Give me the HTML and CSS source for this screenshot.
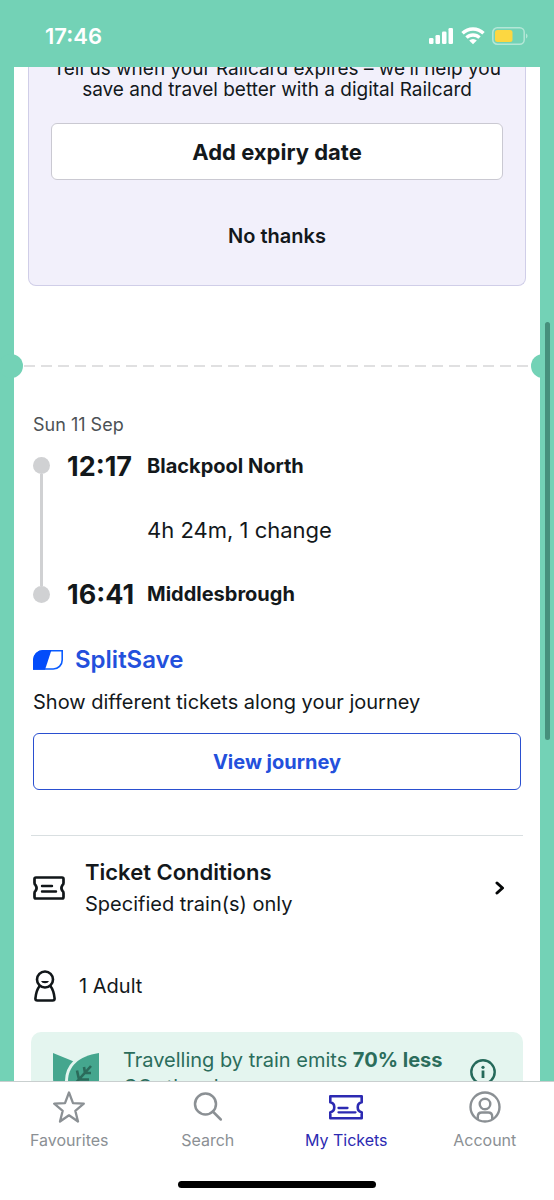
FILE: index.html
```html
<!DOCTYPE html>
<html lang="en">
<head>
<meta charset="utf-8">
<meta name="viewport" content="width=device-width, initial-scale=1">
<title>My Tickets</title>
<link rel="stylesheet" href="styles.css">
</head>
<body>
<div class="app">
  <header class="status">
    <time class="clock">17:46</time>
    <div class="status-icons">
      <svg width="26" height="18" viewBox="0 0 26 18" fill="#fff"><rect x="1" y="11" width="4.500" height="6" rx="1.300"/><rect x="7.500" y="8" width="4.500" height="9" rx="1.300"/><rect x="14" y="4.500" width="4.500" height="12.500" rx="1.300"/><rect x="20.500" y="1" width="4.500" height="16" rx="1.300"/></svg>
      <svg width="24" height="18" viewBox="0 0 24 18"><g fill="none" stroke="#fff" stroke-width="3.400"><path d="M1.500 6.300a15 15 0 0 1 21 0"/><path d="M5.500 10.600a9.300 9.300 0 0 1 13 0"/></g><path d="M8.200 13.500a5.400 5.400 0 0 1 7.600 0L12 17.300z" fill="#fff"/></svg>
      <svg width="36" height="18" viewBox="0 0 36 18"><rect x=".8" y=".8" width="31.400" height="16.400" rx="4.500" fill="none" stroke="#b4e7d7" stroke-width="1.500"/><path d="M34 6.500v5c2-.8 2-4.200 0-5z" fill="#b4e7d7"/><rect x="3" y="3" width="17.500" height="12" rx="2.500" fill="#fcd741"/></svg>
    </div>
  </header>

  <main class="view">
    <article class="ticket">
      <section class="promo">
        <p class="promo-text">Tell us when your Railcard expires – we’ll help you save and travel better with a digital Railcard</p>
        <button class="promo-button" type="button">Add expiry date</button>
        <button class="promo-dismiss" type="button">No thanks</button>
      </section>

      <div class="perforation"></div>

      <section class="journey">
        <p class="date">Sun 11 Sep</p>
        <div class="legs">
          <div class="track"><i class="dot"></i><i class="line"></i><i class="dot"></i></div>
          <time class="time">12:17</time><strong class="station">Blackpool North</strong>
          <span class="duration">4h 24m, 1 change</span>
          <time class="time">16:41</time><strong class="station">Middlesbrough</strong>
        </div>
        <h2 class="split">
          <svg width="30" height="20" viewBox="0 0 30 20"><path d="M10 .8h19.200V10a9 9 0 0 1-9 9H.8V10A9.200 9.200 0 0 1 10 .8z" fill="#fff" stroke="#0a5cff" stroke-width="1.600"/><path d="M10 0h8.500L12 19.800H0V10A10 10 0 0 1 10 0z" fill="#034cfa"/></svg>
          SplitSave
        </h2>
        <p class="split-text">Show different tickets along your journey</p>
        <button class="view-button" type="button">View journey</button>
      </section>

      <a class="conditions" href="#conditions">
        <svg width="32" height="24" viewBox="0 0 32 24" fill="none" stroke="#111619" stroke-width="2.700" stroke-linecap="round" stroke-linejoin="round"><path d="M3 1.500h26q1.500 0 1.500 1.500v4q0 1.500-1 2-2.200 3 0 6 1 .5 1 2v4q0 1.500-1.500 1.500H3Q1.500 22.500 1.500 21v-4q0-1.500 1-2 2.200-3 0-6-1-.5-1-2V3Q1.500 1.500 3 1.500z"/><path d="M9 10h10M9 15.500h14" stroke-width="2.400"/></svg>
        <span class="conditions-copy"><strong class="conditions-title">Ticket Conditions</strong><span>Specified train(s) only</span></span>
        <svg width="10" height="14" viewBox="0 0 10 14" fill="none" stroke="#050708" stroke-width="3" stroke-linecap="round" stroke-linejoin="round"><path d="M2 2l5.500 5L2 12"/></svg>
      </a>

      <p class="passengers">
        <svg width="22" height="32" viewBox="0 0 22 32" fill="none" stroke="#111619" stroke-width="2.600" stroke-linejoin="round"><circle cx="11" cy="9.500" r="8"/><path d="M5.800 15.700C3.200 19 1.800 24 1.400 28.500q0 2 2 2h15.200q2 0 2-2C20.200 24 18.800 19 16.200 15.700"/><path d="M7 11h8a4.200 3.200 0 0 1-8 0z" fill="#111619" stroke="none"/></svg>
        1 Adult
      </p>

      <section class="eco">
        <svg class="leaf" width="46" height="50" viewBox="0 0 46 50"><path d="M0 0l22 9v37C5 40 0 34 0 25z" fill="#45a68e"/><path d="M46 0v26c0 11-7 18-16 20-9-1-15-8-15-18C15 14 25 3 46 0z" fill="#45a68e" stroke="#e4f5ef" stroke-width="6" paint-order="stroke"/><g fill="none" stroke="#2b6b5b" stroke-width="2.600"><path d="M20 33l18-20M26 26.500l-2-9M26 26.500h10M32 20l-1-6M32 20h6"/></g></svg>
        <p class="eco-text">Travelling by train emits <strong>70% less</strong> CO₂ than by car</p>
        <button class="info" type="button" aria-label="More information"><svg width="26" height="26" viewBox="0 0 26 26"><circle cx="13" cy="13" r="11.700" fill="none" stroke="#25695a" stroke-width="2.400"/><path d="M13 11.500V19" stroke="#25695a" stroke-width="2.800"/><circle cx="13" cy="8.300" r="1.600" fill="#25695a"/></svg></button>
      </section>
    </article>
    <div class="scrollbar"></div>
  </main>

  <footer class="footer">
    <nav class="tabs">
      <a class="tab" href="#favourites"><svg width="32" height="32" viewBox="0 0 32 32" fill="none" stroke="#8b9094" stroke-width="2.300" stroke-linejoin="round"><path d="M16 1.500l4 10.700 10.800.5-8.500 7.100L25 30.500l-9-6.200-9 6.200 2.700-10.700-8.500-7.100 10.800-.5z"/></svg>Favourites</a>
      <a class="tab" href="#search"><svg width="32" height="32" viewBox="0 0 32 32" fill="none" stroke="#8b9094" stroke-width="2.500" stroke-linecap="round"><circle cx="13.500" cy="13" r="10.500"/><path d="M20.800 20.500l8 8"/></svg>Search</a>
      <a class="tab tab-active" href="#tickets" aria-current="page"><svg width="36" height="32" viewBox="0 0 36 32" fill="none" stroke="#2c2ab2" stroke-width="2.600"><path d="M2.300 5.300h31.400v6c-5.300.8-5.300 9.200 0 10v6H2.300v-6c5.300-.8 5.300-9.200 0-10z" stroke-linejoin="round"/><path d="M10.500 17h9M10.500 21.300h17" stroke-width="2.300" stroke-linecap="round"/></svg>My Tickets</a>
      <a class="tab" href="#account"><svg width="32" height="32" viewBox="0 0 32 32" fill="none" stroke="#8b9094" stroke-width="2.400"><circle cx="16" cy="16" r="14.500"/><circle cx="16" cy="13" r="5.300"/><path d="M8.800 28v-2.500q0-4 4-4h6.400q4 0 4 4V28"/></svg>Account</a>
    </nav>
    <div class="home-bar"></div>
  </footer>
</div>
</body>
</html>
```
FILE: styles.css
```css
* { box-sizing: border-box; }

body {
  margin: 0;
  font-family: Inter, "Liberation Sans", sans-serif;
  color: #13181b;
}

p, h2 { margin: 0; }

a { color: inherit; text-decoration: none; }

button {
  padding: 0;
  border: 0;
  background: none;
  color: inherit;
  font: inherit;
}

svg { display: block; flex: none; }

.app {
  display: flex;
  flex-direction: column;
  height: 100vh;
  background: #73d2b6;
}

/* Status bar */
.status {
  display: flex;
  flex: none;
  align-items: center;
  justify-content: space-between;
  height: 67px;
  padding: 4px 26px 0 45px;
  color: #fff;
}

.clock { font-size: 22px; font-weight: 600; }

.status-icons { display: flex; align-items: center; gap: 7px; }

/* Scrolled ticket view */
.view {
  position: relative;
  flex: 1;
  min-height: 0;
  padding: 0 14px;
  overflow: hidden;
}

.ticket {
  margin-top: -9px;
  padding: 0 14px;
  background: #fff;
}

.scrollbar {
  position: absolute;
  top: 255px;
  right: 4px;
  width: 5px;
  height: 418px;
  border-radius: 3px;
  background: #46907c;
}

/* Railcard prompt */
.promo {
  display: flex;
  flex-direction: column;
  align-items: center;
  padding: 0 22px 23px;
  border: 1px solid #d0cee8;
  border-top: 0;
  border-radius: 0 0 8px 8px;
  background: #f2f0fb;
}

.promo-text {
  margin-bottom: 23px;
  font-size: 19px;
  line-height: 21px;
  text-align: center;
}

.promo-button,
.view-button {
  width: 100%;
  height: 57px;
  border: 1px solid #cac9d2;
  border-radius: 6px;
  background: #fff;
  font-size: 22px;
  font-weight: 700;
}

.promo-dismiss {
  height: 52px;
  margin-top: 30px;
  font-size: 20px;
  font-weight: 600;
}

.perforation {
  position: relative;
  height: 2px;
  margin: 79px -4px 0;
  background: repeating-linear-gradient(90deg, #e0e0e1 0 11px, transparent 11px 17px);
}

.perforation::before,
.perforation::after {
  content: "";
  position: absolute;
  top: -11px;
  width: 24px;
  height: 24px;
  border-radius: 50%;
  background: #73d2b6;
}

.perforation::before { left: -25px; }
.perforation::after { right: -25px; }

/* Journey */
.journey { padding: 46px 5px 0; }

.date {
  color: #4c5155;
  font-size: 18px;
  line-height: 24px;
}

.legs {
  display: grid;
  grid-template-columns: 34px 80px 1fr;
  grid-template-rows: 32px 96px 32px;
  align-items: center;
  margin-top: 13px;
}

.track {
  display: flex;
  grid-row: 1 / 4;
  flex-direction: column;
  align-items: center;
  width: 17px;
  height: 146px;
}

.dot {
  width: 17px;
  height: 17px;
  border-radius: 50%;
  background: #d0d1d3;
}

.line { flex: 1; width: 3px; background: #d0d1d3; }

.time { font-size: 27px; font-weight: 700; }

.station { font-size: 20px; font-weight: 700; }

.duration { grid-column: 3; font-size: 22px; }

.split {
  display: flex;
  align-items: center;
  gap: 12px;
  margin-top: 34px;
  color: #2350dc;
  font-size: 24px;
  font-weight: 600;
  line-height: 32px;
}

.split-text {
  margin: 12px 0 17px;
  font-size: 20px;
  line-height: 28px;
}

.view-button {
  border: 1px solid #2a4fd0;
  color: #2350dc;
  font-size: 20px;
}

/* Ticket details */
.conditions {
  display: flex;
  align-items: center;
  margin: 45px 3px 0;
  padding: 20px 18px 20px 2px;
  border-top: 1px solid #d9dfe1;
}

.conditions-copy {
  display: flex;
  flex: 1;
  flex-direction: column;
  margin-left: 20px;
  font-size: 20px;
  line-height: 32px;
}

.conditions-title { font-size: 22px; font-weight: 600; }

.passengers {
  display: flex;
  align-items: center;
  gap: 23px;
  margin: 30px 0 0 6px;
  font-size: 20px;
  line-height: 32px;
}

.eco {
  display: flex;
  align-items: flex-start;
  margin: 30px 3px 0;
  padding: 15px 27px 20px 22px;
  border-radius: 10px;
  background: #e4f5ef;
  color: #2b6d5c;
}

.leaf { margin-top: 6px; }

.eco-text {
  flex: 1;
  margin-left: 24px;
  font-size: 20px;
  line-height: 27px;
}

.info { margin-top: 12px; }

/* Tab bar */
.footer {
  display: flex;
  flex: none;
  flex-direction: column;
  align-items: center;
  justify-content: space-between;
  height: 119px;
  padding: 9px 0 12px;
  border-top: 1px solid #c9cfcf;
  background: #fff;
}

.tabs { display: flex; width: 100%; }

.tab {
  display: flex;
  flex: 1;
  flex-direction: column;
  align-items: center;
  gap: 6px;
  color: #8b9094;
  font-size: 16px;
  line-height: 22px;
}

.tab-active { color: #2c2ab2; }

.home-bar {
  width: 198px;
  height: 7px;
  border-radius: 4px;
  background: #000;
}
```
